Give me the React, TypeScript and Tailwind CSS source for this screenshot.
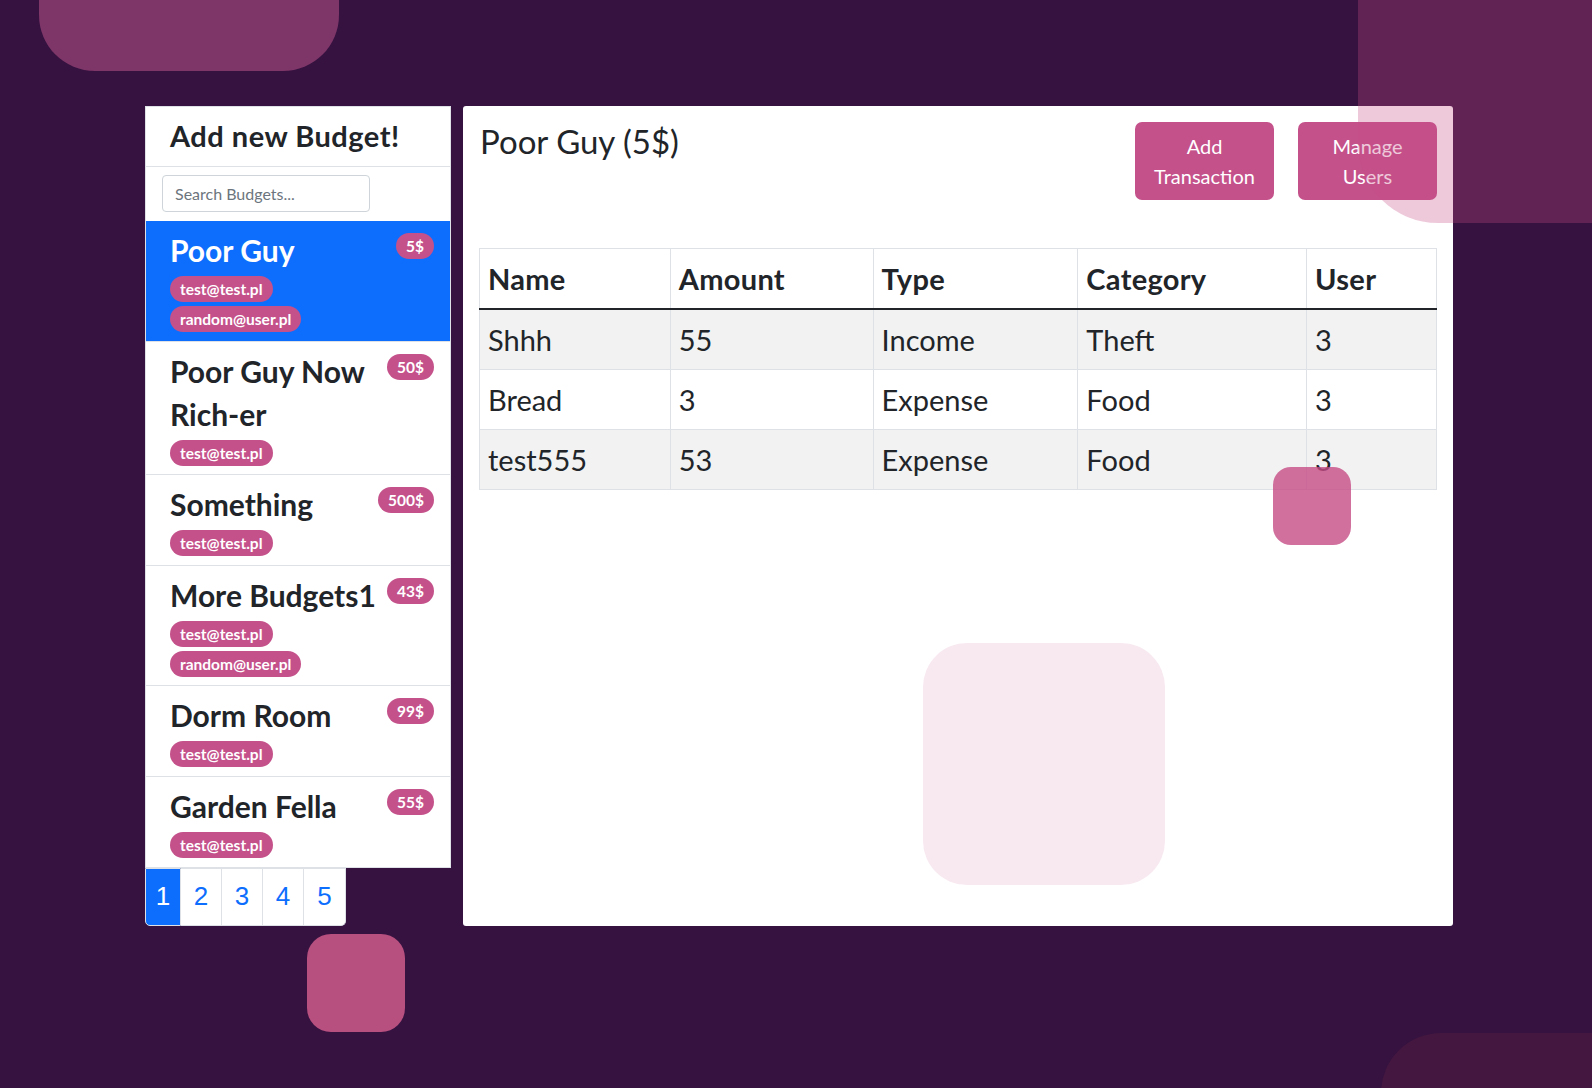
import React from "react";

const PINK = "bg-[#c4518a]";

type Budget = { name: string; amount: string; users: string[]; active?: boolean };

const budgets: Budget[] = [
  { name: "Poor Guy", amount: "5$", users: ["test@test.pl", "random@user.pl"], active: true },
  { name: "Poor Guy Now Rich-er", amount: "50$", users: ["test@test.pl"] },
  { name: "Something", amount: "500$", users: ["test@test.pl"] },
  { name: "More Budgets1", amount: "43$", users: ["test@test.pl", "random@user.pl"] },
  { name: "Dorm Room", amount: "99$", users: ["test@test.pl"] },
  { name: "Garden Fella", amount: "55$", users: ["test@test.pl"] },
];

const rows = [
  ["Shhh", "55", "Income", "Theft", "3"],
  ["Bread", "3", "Expense", "Food", "3"],
  ["test555", "53", "Expense", "Food", "3"],
];

const colW = ["w-[191px]", "w-[203px]", "w-[205px]", "w-[229px]", "w-[130px]"];

function Badge({ children }: { children: React.ReactNode }) {
  return (
    <span
      className={`inline-block ${PINK} text-white text-[15.5px] font-bold leading-[16px] px-[10px] py-[5px] rounded-full whitespace-nowrap`}
    >
      {children}
    </span>
  );
}

export default function App() {
  return (
    <div className="relative w-full h-[1088px] overflow-hidden bg-[#351240] font-['Lato',sans-serif] text-[#212529]">
      {/* main layout */}
      <div className="flex items-stretch gap-[12px] pl-[145px] pt-[106px]">
        {/* left column */}
        <div className="w-[306px] flex flex-col">
          <div className="bg-white border border-[#dee2e6]">
            <div className="h-[60px] pt-[12px] pl-[24px] border-b border-[#dee2e6]">
              <h3 className="text-[29px] leading-[34px] font-bold tracking-[0.5px]">Add new Budget!</h3>
            </div>
            <div className="px-4 pt-2 pb-[9px]">
              <input
                className="w-[208px] h-[37px] border border-[#ced4da] rounded-[4px] px-3 text-[16px] placeholder:text-[#6c757d] outline-none"
                placeholder="Search Budgets..."
              />
            </div>
            <div className="flex flex-col">
              {budgets.map((b, i) => (
                <div
                  key={b.name}
                  className={`flex items-start justify-between pl-[24px] pr-4 pt-2 pb-[8.6px] ${
                    b.active ? "bg-[#0d6efd] text-white" : "bg-white text-[#212529]"
                  } ${i > 0 && !b.active ? "border-t border-[#dee2e6]" : ""}`}
                >
                  <div className="flex-1 min-w-0">
                    <div className="text-[30px] leading-[43px] font-bold">{b.name}</div>
                    <div className="mt-[4px] flex flex-col items-start gap-[4px]">
                      {b.users.map((u) => (
                        <Badge key={u}>{u}</Badge>
                      ))}
                    </div>
                  </div>
                  <div className="shrink-0 ml-2 mt-[4px]">
                    <Badge>{b.amount}</Badge>
                  </div>
                </div>
              ))}
            </div>
          </div>
          {/* pagination */}
          <div className="flex font-['Liberation_Sans',sans-serif] text-[26px]">
            {["1", "2", "3", "4", "5"].map((n, i) => (
              <div
                key={n}
                className={`h-[58px] flex items-center justify-center border-y border-r border-[#dee2e6] ${
                  i === 0
                    ? "w-[36px] bg-[#0d6efd] text-white border-l border-[#0d6efd] rounded-bl-[5px]"
                    : "bg-white text-[#0d6efd] w-[41px]"
                } ${i === 4 ? "rounded-br-[5px] w-[42px]" : ""}`}
              >
                {n}
              </div>
            ))}
          </div>
        </div>

        {/* main panel */}
        <div className="w-[990px] bg-white rounded-[3px] p-4">
          <div className="flex items-start justify-between">
            <h2 className="text-[33px] leading-[38px] font-normal pl-[1px]">Poor Guy (5$)</h2>
            <div className="flex gap-[24px]">
              <button className={`w-[139px] h-[78px] ${PINK} rounded-[7px] text-white text-[20px] leading-[30px] text-center`}>
                <span className="block">Add</span>
                <span className="block">Transaction</span>
              </button>
              <button className={`w-[139px] h-[78px] ${PINK} rounded-[7px] text-white text-[20px] leading-[30px] text-center`}>
                <span className="block">Manage</span>
                <span className="block">Users</span>
              </button>
            </div>
          </div>

          <table className="mt-[48px] w-[958px] border-collapse text-[29px]">
            <thead>
              <tr>
                {["Name", "Amount", "Type", "Category", "User"].map((h, i) => (
                  <th
                    key={h}
                    className={`${colW[i]} text-left font-bold px-2 py-2 leading-[43px] border border-[#dee2e6] border-b-2 border-b-[#212529] tracking-[0.3px]`}
                  >
                    {h}
                  </th>
                ))}
              </tr>
            </thead>
            <tbody>
              {rows.map((r, ri) => (
                <tr key={ri} className={ri % 2 === 0 ? "bg-[#f2f2f2]" : "bg-white"}>
                  {r.map((c, ci) => (
                    <td key={ci} className="px-2 py-2 leading-[43px] border border-[#dee2e6] font-normal">
                      {c}
                    </td>
                  ))}
                </tr>
              ))}
            </tbody>
          </table>
        </div>
      </div>

      {/* decorative shapes */}
      <div className="absolute left-[39px] top-[-229px] w-[300px] h-[300px] rounded-[56px] bg-[#7e3567]" />
      <div className="absolute left-[1358px] top-[-100px] w-[400px] h-[323px] rounded-bl-[80px] bg-[#c64b84]/30" />
      <div className="absolute left-[1273px] top-[467px] w-[78px] h-[78px] rounded-[18px] bg-[#c64b84]/80" />
      <div className="absolute left-[923px] top-[643px] w-[242px] h-[242px] rounded-[44px] bg-[#c64b84]/[0.12]" />
      <div className="absolute left-[307px] top-[934px] w-[98px] h-[98px] rounded-[24px] bg-[#b74f7f]" />
      <div className="absolute left-[1381px] top-[1033px] w-[300px] h-[200px] rounded-tl-[60px] bg-[#43173f]" />
    </div>
  );
}
